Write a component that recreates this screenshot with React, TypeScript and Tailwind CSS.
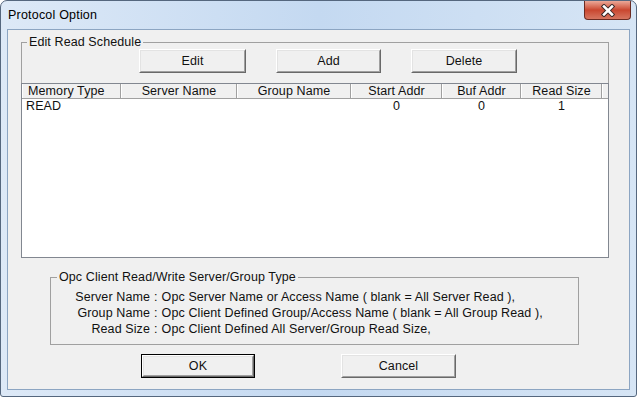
import React from "react";

const font = { fontFamily: '"Liberation Sans", Arial, sans-serif' };

function ClassicButton({ label, w, def }: { label: string; w: string; def?: boolean }) {
  return (
    <div className={`${w} h-[24px] ${def ? "border border-[#000]" : ""} bg-[#f0f0f0]`}>
      <div className="w-full h-full border border-t-white border-l-white border-r-[#696969] border-b-[#696969]">
        <div className="w-full h-full border border-t-[#e3e3e3] border-l-[#e3e3e3] border-r-[#a0a0a0] border-b-[#a0a0a0] flex items-center justify-center text-[12.5px] tracking-[0.1px] text-[#111] leading-none">
          {label}
        </div>
      </div>
    </div>
  );
}

const cols: { name: string; w: string; align: string; val: string }[] = [
  { name: "Memory Type", w: "w-[99px]", align: "justify-start pl-[5px]", val: "READ" },
  { name: "Server Name", w: "w-[116px]", align: "justify-center", val: "" },
  { name: "Group Name", w: "w-[114px]", align: "justify-center", val: "" },
  { name: "Start Addr", w: "w-[91px]", align: "justify-center", val: "0" },
  { name: "Buf Addr", w: "w-[79px]", align: "justify-center", val: "0" },
  { name: "Read Size", w: "w-[81px]", align: "justify-center", val: "1" },
];

export default function App() {
  return (
    <div
      style={font}
      className="w-[637px] h-[397px] relative border border-[#55677e] rounded-t-[7px] rounded-b-[3px] bg-gradient-to-r from-[#dde9f7] via-[#c4d9f1] to-[#d6e5f5] px-[6px] pb-[6px] flex flex-col overflow-hidden"
    >
      {/* title bar */}
      <div className="h-[28px] flex items-center pl-[1px] text-[12.5px] tracking-[0.2px] text-black leading-none shrink-0">
        Protocol Option
      </div>
      {/* close button */}
      <div className="absolute top-0 right-[5px] w-[47px] h-[19px] rounded-b-[4px] border border-t-0 border-[#6b2b22] bg-gradient-to-b from-[#eaa898] via-[#c9462f] to-[#d67560] flex items-center justify-center">
        <svg width="16" height="13" viewBox="0 0 16 13">
          <path d="M4 2.5 L12 10.5 M12 2.5 L4 10.5" stroke="#3b2a2a" strokeWidth="4.5" strokeLinecap="square" />
          <path d="M4 2.5 L12 10.5 M12 2.5 L4 10.5" stroke="#ffffff" strokeWidth="2.5" strokeLinecap="square" />
        </svg>
      </div>
      {/* client area */}
      <div className="flex-1 border border-[#8ca5c2] bg-[#f0f0f0] flex flex-col pl-[13px] pt-[12px] text-[12.5px] tracking-[0.1px] text-[#111]">
        {/* group 1 */}
        <div className="w-[588px] flex flex-col relative">
          <div className="absolute top-[-7px] left-[6px] px-[2px] bg-[#f0f0f0] leading-[14px]">
            Edit Read Schedule
          </div>
          <div className="h-[41px] border border-b-0 border-[#a0a0a0] flex items-start pt-[6px] pl-[117px] gap-[30px]">
            <ClassicButton label="Edit" w="w-[107px]" />
            <ClassicButton label="Add" w="w-[105px]" />
            <ClassicButton label="Delete" w="w-[106px]" />
          </div>
          <div className="h-[175px] border border-[#828790] bg-white flex flex-col">
            <div className="h-[15px] flex bg-[#f0f0f0] border-b border-[#a0a0a0] shrink-0">
              {cols.map((c) => (
                <div
                  key={c.name}
                  className={`${c.w} h-full flex items-center ${c.align} leading-none border-r border-[#a0a0a0] border-l border-l-white`}
                >
                  {c.name}
                </div>
              ))}
              <div className="flex-1 border-l border-l-white" />
            </div>
            <div className="h-[14px] flex">
              {cols.map((c, i) => (
                <div
                  key={c.name}
                  className={`${c.w} h-full flex items-center ${i === 0 ? "justify-start pl-[4px]" : "justify-center"} leading-none`}
                >
                  {c.val}
                </div>
              ))}
            </div>
          </div>
        </div>
        {/* group 2 */}
        <div className="mt-[19px] ml-[29px] w-[529px] h-[68px] border border-[#a0a0a0] relative pt-[11px]">
          <div className="absolute top-[-8px] left-[6px] px-[2px] bg-[#f0f0f0] leading-[14px]">
            Opc Client Read/Write Server/Group Type
          </div>
          {[
            ["Server Name", "Opc Server Name or Access Name ( blank = All Server Read ),"],
            ["Group Name", "Opc Client Defined Group/Access Name ( blank = All Group Read ),"],
            ["Read Size", "Opc Client Defined All Server/Group Read Size,"],
          ].map(([k, v]) => (
            <div key={k} className="h-[16px] flex items-center leading-none">
              <span className="w-[99px] text-right">{k}</span>
              <span className="px-[4px]">:</span>
              <span>{v}</span>
            </div>
          ))}
        </div>
        {/* bottom buttons */}
        <div className="mt-[9px] flex pl-[120px] gap-[86px]">
          <ClassicButton label="OK" w="w-[114px]" def />
          <ClassicButton label="Cancel" w="w-[115px]" />
        </div>
      </div>
    </div>
  );
}
